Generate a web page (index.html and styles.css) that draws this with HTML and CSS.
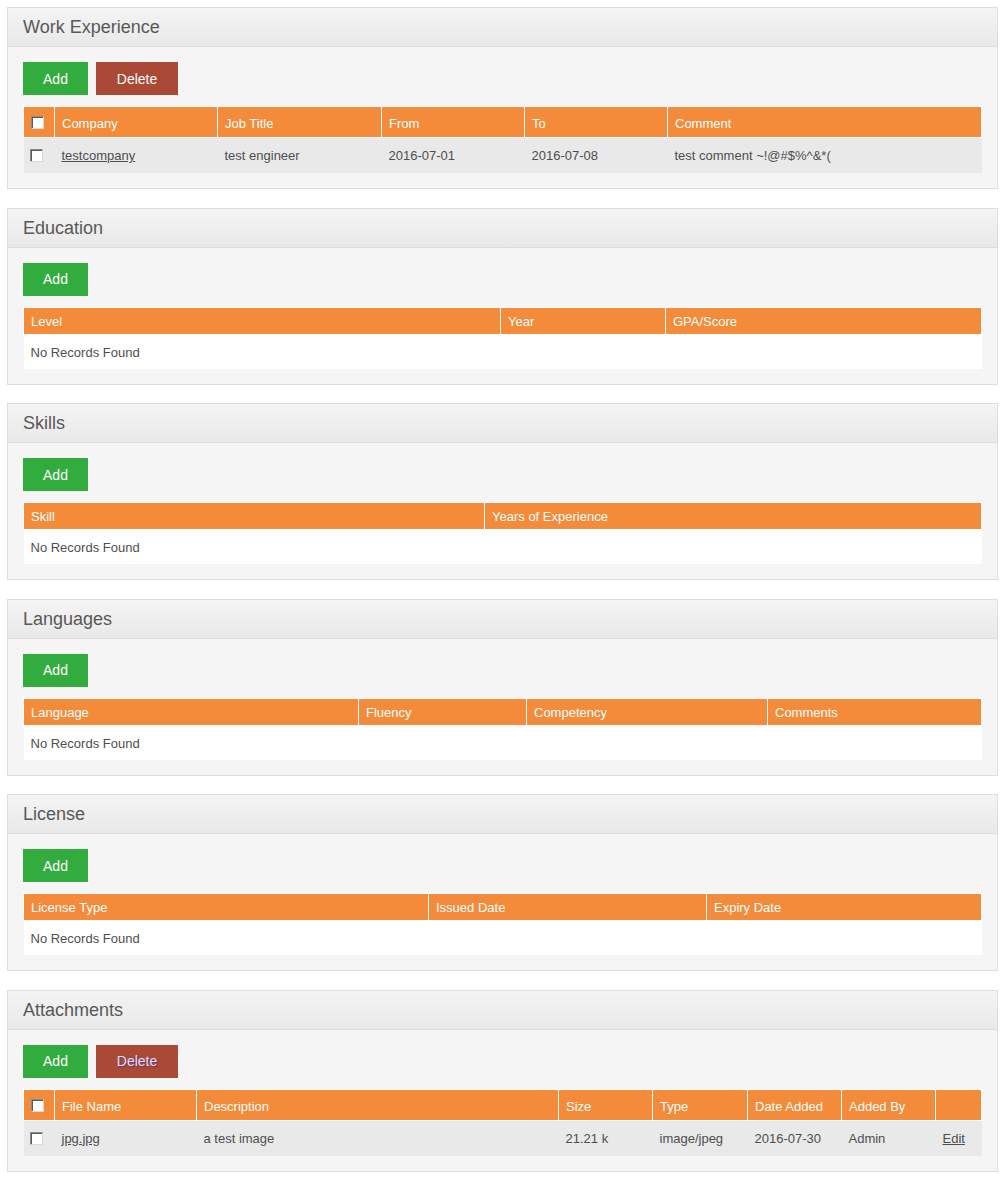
FILE: index.html
```html
<!DOCTYPE html>
<html>
<head>
<meta charset="utf-8">
<title>Qualifications</title>
<link rel="stylesheet" href="styles.css">
</head>
<body>
<div class="page">

  <section class="box">
    <div class="box-head">Work Experience</div>
    <div class="box-body">
      <div class="actions">
        <button class="btn btn-add">Add</button>
        <button class="btn btn-del">Delete</button>
      </div>
      <table class="grid t-check">
        <colgroup>
          <col class="w31"><col class="w163"><col class="w164"><col class="w143"><col class="w143"><col>
        </colgroup>
        <thead>
          <tr><th class="cb"><input type="checkbox" class="chk"></th><th>Company</th><th>Job Title</th><th>From</th><th>To</th><th>Comment</th></tr>
        </thead>
        <tbody>
          <tr class="odd"><td class="cb"><input type="checkbox" class="chk"></td><td><a href="#">testcompany</a></td><td>test engineer</td><td>2016-07-01</td><td>2016-07-08</td><td>test comment ~!@#$%^&amp;*(</td></tr>
        </tbody>
      </table>
    </div>
  </section>

  <section class="box">
    <div class="box-head">Education</div>
    <div class="box-body">
      <div class="actions">
        <button class="btn btn-add">Add</button>
      </div>
      <table class="grid">
        <colgroup><col class="w477"><col class="w165"><col></colgroup>
        <thead><tr><th>Level</th><th>Year</th><th>GPA/Score</th></tr></thead>
        <tbody><tr><td colspan="3">No Records Found</td></tr></tbody>
      </table>
    </div>
  </section>

  <section class="box">
    <div class="box-head">Skills</div>
    <div class="box-body">
      <div class="actions">
        <button class="btn btn-add">Add</button>
      </div>
      <table class="grid">
        <colgroup><col class="w461"><col></colgroup>
        <thead><tr><th>Skill</th><th>Years of Experience</th></tr></thead>
        <tbody><tr><td colspan="2">No Records Found</td></tr></tbody>
      </table>
    </div>
  </section>

  <section class="box">
    <div class="box-head">Languages</div>
    <div class="box-body">
      <div class="actions">
        <button class="btn btn-add">Add</button>
      </div>
      <table class="grid">
        <colgroup><col class="w335"><col class="w168"><col class="w241"><col></colgroup>
        <thead><tr><th>Language</th><th>Fluency</th><th>Competency</th><th>Comments</th></tr></thead>
        <tbody><tr><td colspan="4">No Records Found</td></tr></tbody>
      </table>
    </div>
  </section>

  <section class="box">
    <div class="box-head">License</div>
    <div class="box-body">
      <div class="actions">
        <button class="btn btn-add">Add</button>
      </div>
      <table class="grid">
        <colgroup><col class="w405"><col class="w278"><col></colgroup>
        <thead><tr><th>License Type</th><th>Issued Date</th><th>Expiry Date</th></tr></thead>
        <tbody><tr><td colspan="3">No Records Found</td></tr></tbody>
      </table>
    </div>
  </section>

  <section class="box box-last">
    <div class="box-head">Attachments</div>
    <div class="box-body">
      <div class="actions">
        <button class="btn btn-add">Add</button>
        <button class="btn btn-del btn-disabled">Delete</button>
      </div>
      <table class="grid t-check">
        <colgroup>
          <col class="w31"><col class="w142"><col class="w362"><col class="w94"><col class="w95"><col class="w94"><col class="w94"><col>
        </colgroup>
        <thead>
          <tr><th class="cb"><input type="checkbox" class="chk"></th><th>File Name</th><th>Description</th><th>Size</th><th>Type</th><th>Date Added</th><th>Added By</th><th></th></tr>
        </thead>
        <tbody>
          <tr class="odd"><td class="cb"><input type="checkbox" class="chk"></td><td><a href="#">jpg.jpg</a></td><td>a test image</td><td>21.21 k</td><td>image/jpeg</td><td>2016-07-30</td><td>Admin</td><td class="edit"><a href="#">Edit</a></td></tr>
        </tbody>
      </table>
    </div>
  </section>

</div>
</body>
</html>
```

FILE: styles.css
```css
html, body {
  margin: 0;
  padding: 0;
  background: #ffffff;
}

body {
  font-family: "Liberation Sans", Arial, sans-serif;
  color: #4e4e4e;
}

.page {
  padding: 7px 9px 10px 7px;
}

.box {
  border: 1px solid #dedede;
  background: #f5f5f5;
  margin-bottom: 18.5px;
}

.box-last {
  margin-bottom: 0;
}

.box-head {
  height: 38px;
  line-height: 38px;
  padding: 0 15px;
  font-size: 18px;
  color: #585858;
  background: linear-gradient(to bottom, #f4f4f4 0%, #e9e9e9 100%);
  border-bottom: 1px solid #dcdcdc;
}

.box-body {
  padding: 15px;
}

.actions {
  display: flex;
  gap: 8px;
  margin-bottom: 11px;
}

.btn {
  height: 33px;
  padding: 0 19px;
  border: 0;
  font-family: "Liberation Sans", Arial, sans-serif;
  font-size: 14px;
  color: #ffffff;
  cursor: pointer;
}

.btn-add {
  background: #33ac3f;
  width: 65px;
}

.btn-del {
  background: #aa4935;
  width: 82px;
}

.btn-disabled {
  color: #e4def0;
  text-shadow: 1px 1px 1px rgba(60, 50, 150, 0.7);
}

.grid {
  width: 100%;
  border-collapse: collapse;
  table-layout: fixed;
  font-size: 13px;
}

.grid th {
  background: #f38b3a;
  color: #ffffff;
  font-weight: normal;
  text-align: left;
  line-height: 16px;
  padding: 6px 7px 4px;
  border: 1px solid #ffffff;
  white-space: nowrap;
  overflow: hidden;
}

.t-check th {
  padding: 9px 7px 5px;
}

.grid td {
  background: #ffffff;
  line-height: 16px;
  padding: 10px 7px 8px;
  color: #4e4e4e;
  white-space: nowrap;
}

.t-check td {
  padding: 10px 7px 9px;
}

.grid tr.odd td {
  background: #e9e9e9;
}

.grid th.cb {
  padding: 9px 0 0 7px;
  vertical-align: top;
}

.grid td.cb {
  padding: 11px 0 0 6px;
  vertical-align: top;
}

.grid a {
  color: #4e4e4e;
  text-decoration: underline;
}

.chk {
  appearance: none;
  -webkit-appearance: none;
  display: block;
  width: 13px;
  height: 13px;
  margin: 0;
  background: #ffffff;
  border: 1px solid;
  border-color: #8a8a8a #d8d8d8 #d8d8d8 #8a8a8a;
  box-shadow: inset 1px 1px 0 #5a5a5a;
  box-sizing: border-box;
}

col.w31 { width: 31px; }
col.w94 { width: 94px; }
col.w95 { width: 95px; }
col.w142 { width: 142px; }
col.w143 { width: 143px; }
col.w163 { width: 163px; }
col.w164 { width: 164px; }
col.w165 { width: 165px; }
col.w168 { width: 168px; }
col.w241 { width: 241px; }
col.w278 { width: 278px; }
col.w335 { width: 335px; }
col.w362 { width: 362px; }
col.w405 { width: 405px; }
col.w461 { width: 461px; }
col.w477 { width: 477px; }
```
